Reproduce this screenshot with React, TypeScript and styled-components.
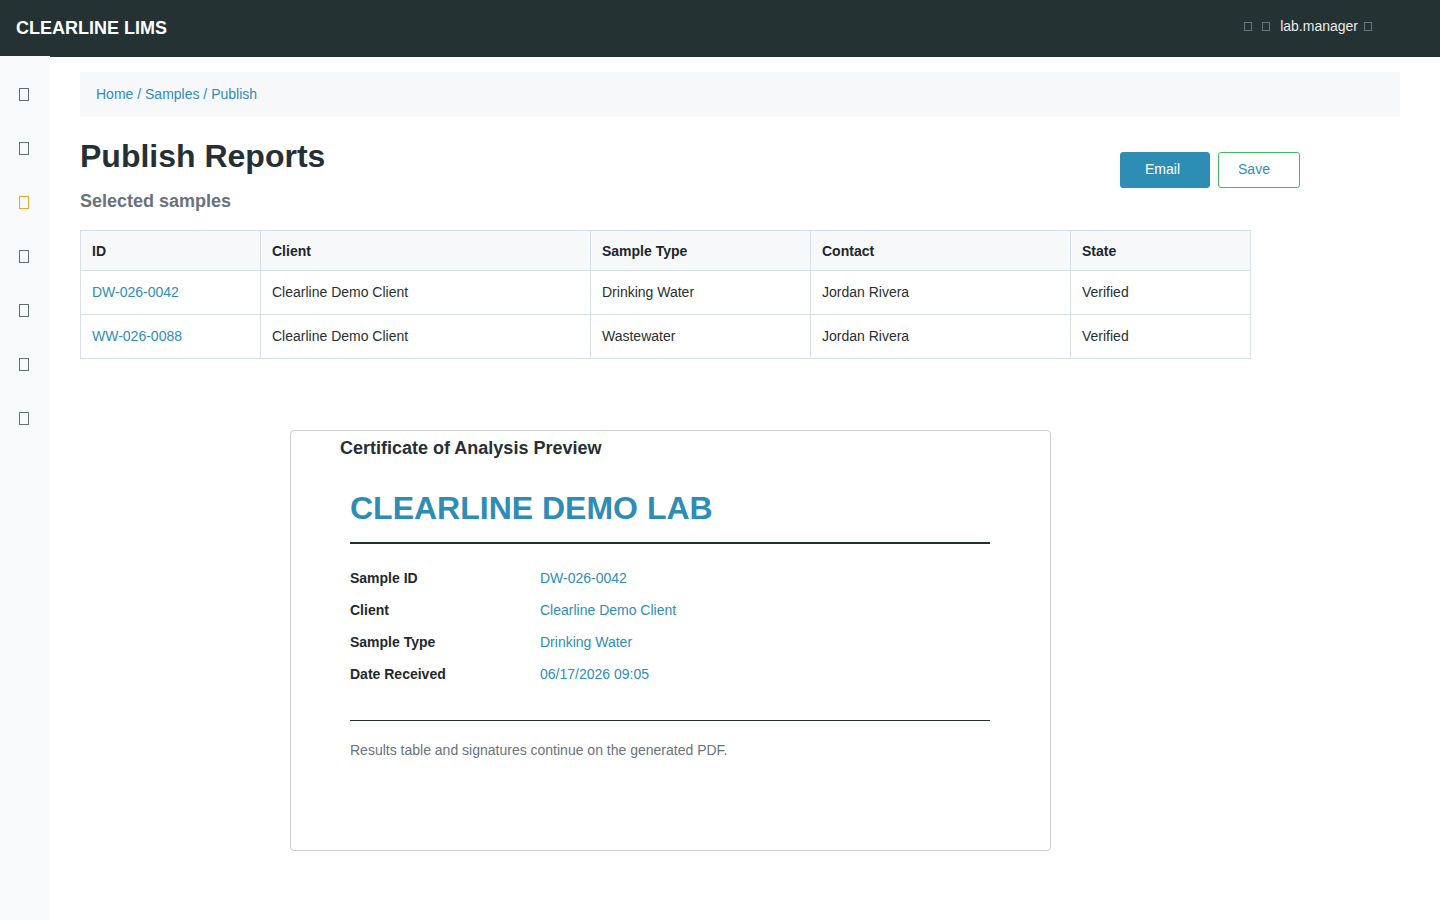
import React from "react";
import styled, { createGlobalStyle } from "styled-components";

const GlobalStyle = createGlobalStyle`
    html, body {
        margin: 0;
        padding: 0;
        background: #fff;
        font-family: "Liberation Sans", Arial, sans-serif;
        color: #212529;
    }
    * { box-sizing: border-box; }
`;

const BLUE = "#2f8db7";

const Page = styled.div`
    display: flex;
    flex-direction: column;
    min-height: 920px;
`;

const TopBar = styled.header`
    height: 56px;
    background: #253234;
    display: flex;
    align-items: center;
    justify-content: space-between;
    padding: 0 16px;
`;

const Brand = styled.div`
    color: #fff;
    font-size: 18px;
    font-weight: bold;
    margin-top: 1px;
`;

const UserArea = styled.div`
    display: flex;
    align-items: center;
    gap: 10px;
    margin-right: 52px;
    margin-bottom: 4px;
    color: #e8ecec;
    font-size: 14px;
`;

// missing-glyph boxes, as the icon font never loaded
const Glyph = styled.span<{ $color?: string; $w?: number; $h?: number }>`
    display: inline-block;
    width: ${(p) => p.$w ?? 8}px;
    height: ${(p) => p.$h ?? 9}px;
    border: 1px solid ${(p) => p.$color ?? "#69757a"};
`;

const Body = styled.div`
    display: flex;
    flex: 1;
`;

const SideNav = styled.nav`
    width: 50px;
    background: #f8fafc;
    display: flex;
    flex-direction: column;
    align-items: center;
    padding: 32px 2px 0 0;
    gap: 41px;
    min-height: 864px;
`;

const Main = styled.main`
    flex: 1;
    border-top: 1px solid #253234;
    padding: 15px 40px 40px 30px;
`;

const Breadcrumb = styled.div`
    height: 45px;
    background: #f6f8fa;
    display: flex;
    align-items: center;
    padding: 0 16px 1px;
    font-size: 14px;
    color: ${BLUE};
`;

const HeadRow = styled.div`
    display: flex;
    justify-content: space-between;
    align-items: flex-start;
    padding-right: 100px;
`;

const Title = styled.h1`
    margin: 20px 0 0;
    font-size: 32px;
    line-height: 38px;
    font-weight: bold;
    color: #253036;
`;

const SubTitle = styled.h2`
    margin: 15px 0 0;
    font-size: 18px;
    line-height: 22px;
    font-weight: bold;
    color: #68727c;
`;

const Actions = styled.div`
    display: flex;
    gap: 8px;
    margin-top: 35px;
`;

const Button = styled.button<{ $primary?: boolean }>`
    height: 36px;
    width: ${(p) => (p.$primary ? 90 : 82)}px;
    border-radius: 3px;
    font-family: inherit;
    font-size: 14px;
    cursor: pointer;
    padding: 0 ${(p) => (p.$primary ? 5 : 10)}px 2px 0;
    background: ${(p) => (p.$primary ? "#2e8db5" : "#fff")};
    color: ${(p) => (p.$primary ? "#fff" : BLUE)};
    border: 1px solid ${(p) => (p.$primary ? "#2e8db5" : "#40bb5e")};
`;

const Table = styled.table`
    margin-top: 18px;
    width: 1171px;
    border-collapse: collapse;
    font-size: 14px;
`;

const Th = styled.th<{ $w: number }>`
    width: ${(p) => p.$w}px;
    height: 40px;
    text-align: left;
    padding: 0 11px;
    background: #f6f8fa;
    border: 1px solid #d9dfe6;
    font-weight: bold;
    color: #212529;
`;

const Td = styled.td<{ $link?: boolean }>`
    height: 44px;
    padding: 0 11px 1px;
    border: 1px solid #d9dfe6;
    color: ${(p) => (p.$link ? BLUE : "#2a2f33")};
`;

const PreviewCard = styled.section`
    margin: 71px 0 0 210px;
    width: 761px;
    height: 421px;
    border: 1px solid #c9cdd2;
    border-radius: 4px;
    padding-top: 6px;
`;

const PreviewTitle = styled.div`
    margin-left: 49px;
    font-size: 18px;
    line-height: 22px;
    font-weight: bold;
    color: #253036;
`;

const Doc = styled.div`
    padding: 0 60px 0 59px;
`;

const LabName = styled.div`
    margin-top: 30px;
    font-size: 32px;
    line-height: 38px;
    font-weight: bold;
    color: #2e8db5;
    padding-bottom: 15px;
    border-bottom: 2px solid #253036;
`;

const Fields = styled.div`
    padding: 18px 0 30px;
    border-bottom: 1px solid #253036;
`;

const Field = styled.div`
    display: grid;
    grid-template-columns: 190px 1fr;
    height: 32px;
    align-items: center;
    font-size: 14px;
`;

const FieldLabel = styled.span`
    font-weight: bold;
    color: #23292e;
`;

const FieldValue = styled.span`
    color: ${BLUE};
`;

const Note = styled.p`
    margin: 19px 0 0;
    font-size: 14px;
    line-height: 20px;
    color: #6a737d;
`;

const columns = [
    { key: "id", label: "ID", width: 180 },
    { key: "client", label: "Client", width: 330 },
    { key: "type", label: "Sample Type", width: 220 },
    { key: "contact", label: "Contact", width: 260 },
    { key: "state", label: "State", width: 180 },
];

const samples = [
    { id: "DW-026-0042", client: "Clearline Demo Client", type: "Drinking Water", contact: "Jordan Rivera", state: "Verified" },
    { id: "WW-026-0088", client: "Clearline Demo Client", type: "Wastewater", contact: "Jordan Rivera", state: "Verified" },
];

const coaFields = [
    ["Sample ID", "DW-026-0042"],
    ["Client", "Clearline Demo Client"],
    ["Sample Type", "Drinking Water"],
    ["Date Received", "06/17/2026 09:05"],
];

export default function App() {
    return (
        <Page>
            <GlobalStyle />
            <TopBar>
                <Brand>CLEARLINE LIMS</Brand>
                <UserArea>
                    <Glyph />
                    <Glyph />
                    <span>lab.manager</span>
                    <Glyph style={{ marginLeft: -4 }} />
                </UserArea>
            </TopBar>
            <Body>
                <SideNav>
                    {[0, 1, 2, 3, 4, 5, 6].map((i) => (
                        <Glyph key={i} $w={10} $h={13} $color={i === 2 ? "#f2a533" : "#646d74"} />
                    ))}
                </SideNav>
                <Main>
                    <Breadcrumb>Home / Samples / Publish</Breadcrumb>
                    <HeadRow>
                        <div>
                            <Title>Publish Reports</Title>
                            <SubTitle>Selected samples</SubTitle>
                        </div>
                        <Actions>
                            <Button $primary>Email</Button>
                            <Button>Save</Button>
                        </Actions>
                    </HeadRow>
                    <Table>
                        <thead>
                            <tr>
                                {columns.map((c) => (
                                    <Th key={c.key} $w={c.width}>{c.label}</Th>
                                ))}
                            </tr>
                        </thead>
                        <tbody>
                            {samples.map((s) => (
                                <tr key={s.id}>
                                    <Td $link>{s.id}</Td>
                                    <Td>{s.client}</Td>
                                    <Td>{s.type}</Td>
                                    <Td>{s.contact}</Td>
                                    <Td>{s.state}</Td>
                                </tr>
                            ))}
                        </tbody>
                    </Table>
                    <PreviewCard>
                        <PreviewTitle>Certificate of Analysis Preview</PreviewTitle>
                        <Doc>
                            <LabName>CLEARLINE DEMO LAB</LabName>
                            <Fields>
                                {coaFields.map(([label, value]) => (
                                    <Field key={label}>
                                        <FieldLabel>{label}</FieldLabel>
                                        <FieldValue>{value}</FieldValue>
                                    </Field>
                                ))}
                            </Fields>
                            <Note>Results table and signatures continue on the generated PDF.</Note>
                        </Doc>
                    </PreviewCard>
                </Main>
            </Body>
        </Page>
    );
}
